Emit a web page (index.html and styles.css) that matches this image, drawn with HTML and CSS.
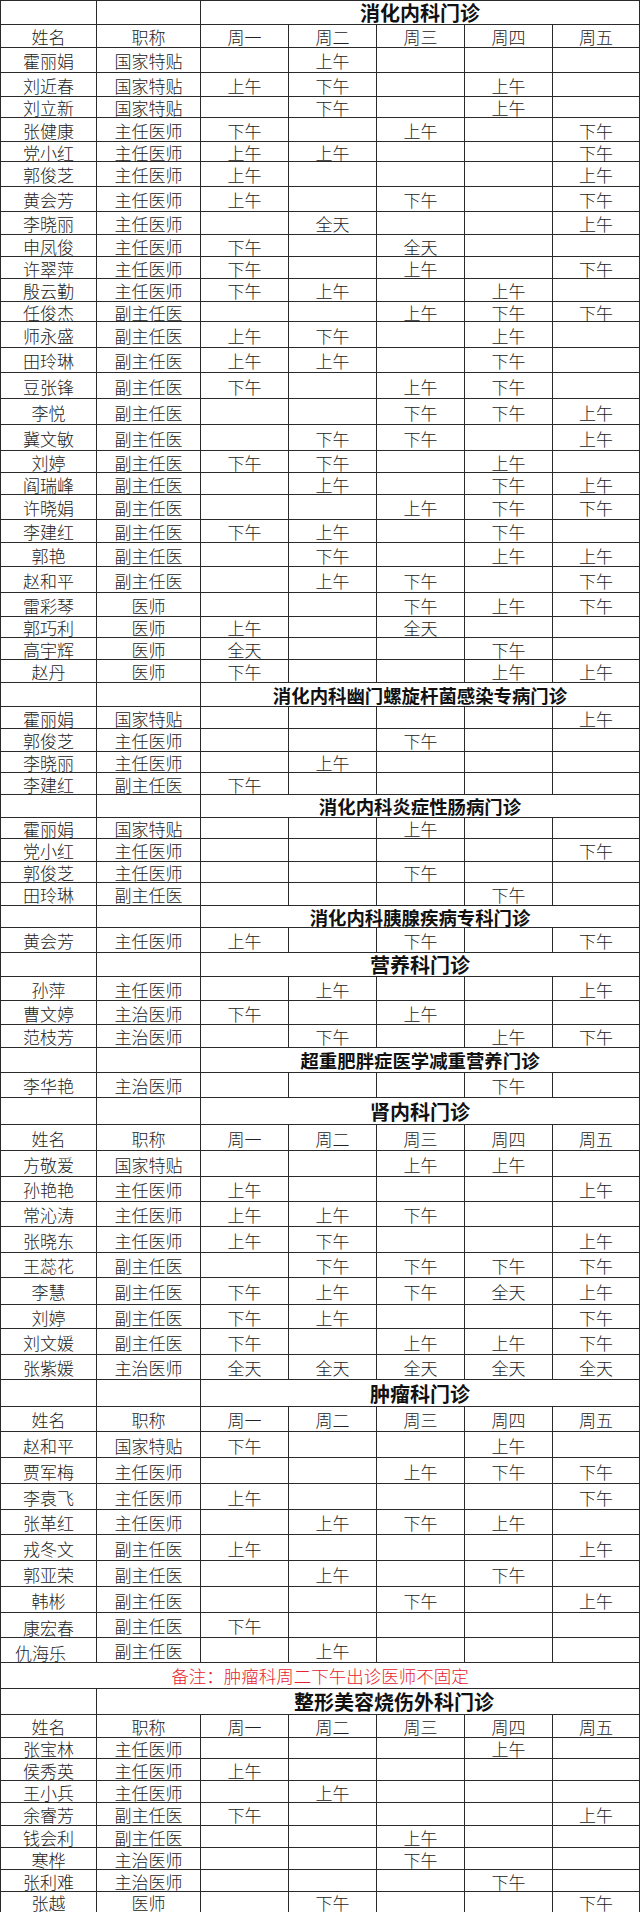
FILE: index.html
```html
<!DOCTYPE html>
<html lang="zh-CN">
<head>
<meta charset="utf-8">
<title>门诊出诊表</title>
<link rel="stylesheet" href="styles.css">
</head>
<body>
<div class="sheet">
  <div class="row h25"><div class="c"></div><div class="c"></div><div class="c t s5">消化内科门诊</div></div>
  <div class="row h23"><div class="c">姓名</div><div class="c">职称</div><div class="c">周一</div><div class="c">周二</div><div class="c">周三</div><div class="c">周四</div><div class="c">周五</div></div>
  <div class="row h25"><div class="c">霍丽娟</div><div class="c">国家特贴</div><div class="c"></div><div class="c">上午</div><div class="c"></div><div class="c"></div><div class="c"></div></div>
  <div class="row h24"><div class="c">刘近春</div><div class="c">国家特贴</div><div class="c">上午</div><div class="c">下午</div><div class="c"></div><div class="c">上午</div><div class="c"></div></div>
  <div class="row h21"><div class="c">刘立新</div><div class="c">国家特贴</div><div class="c"></div><div class="c">下午</div><div class="c"></div><div class="c">上午</div><div class="c"></div></div>
  <div class="row h24"><div class="c">张健康</div><div class="c">主任医师</div><div class="c">下午</div><div class="c"></div><div class="c">上午</div><div class="c"></div><div class="c">下午</div></div>
  <div class="row h20"><div class="c">党小红</div><div class="c">主任医师</div><div class="c">上午</div><div class="c">上午</div><div class="c"></div><div class="c"></div><div class="c">下午</div></div>
  <div class="row h25"><div class="c">郭俊芝</div><div class="c">主任医师</div><div class="c">上午</div><div class="c"></div><div class="c"></div><div class="c"></div><div class="c">上午</div></div>
  <div class="row h25"><div class="c">黄会芳</div><div class="c">主任医师</div><div class="c">上午</div><div class="c"></div><div class="c">下午</div><div class="c"></div><div class="c">下午</div></div>
  <div class="row h23"><div class="c">李晓丽</div><div class="c">主任医师</div><div class="c"></div><div class="c">全天</div><div class="c"></div><div class="c"></div><div class="c">上午</div></div>
  <div class="row h22"><div class="c">申凤俊</div><div class="c">主任医师</div><div class="c">下午</div><div class="c"></div><div class="c">全天</div><div class="c"></div><div class="c"></div></div>
  <div class="row h22"><div class="c">许翠萍</div><div class="c">主任医师</div><div class="c">下午</div><div class="c"></div><div class="c">上午</div><div class="c"></div><div class="c">下午</div></div>
  <div class="row h23"><div class="c">殷云勤</div><div class="c">主任医师</div><div class="c">下午</div><div class="c">上午</div><div class="c"></div><div class="c">上午</div><div class="c"></div></div>
  <div class="row h20"><div class="c">任俊杰</div><div class="c">副主任医</div><div class="c"></div><div class="c"></div><div class="c">上午</div><div class="c">下午</div><div class="c">下午</div></div>
  <div class="row h26"><div class="c">师永盛</div><div class="c">副主任医</div><div class="c">上午</div><div class="c">下午</div><div class="c"></div><div class="c">上午</div><div class="c"></div></div>
  <div class="row h25"><div class="c">田玲琳</div><div class="c">副主任医</div><div class="c">上午</div><div class="c">上午</div><div class="c"></div><div class="c">下午</div><div class="c"></div></div>
  <div class="row h26"><div class="c">豆张锋</div><div class="c">副主任医</div><div class="c">下午</div><div class="c"></div><div class="c">上午</div><div class="c">下午</div><div class="c"></div></div>
  <div class="row h26"><div class="c">李悦</div><div class="c">副主任医</div><div class="c"></div><div class="c"></div><div class="c">下午</div><div class="c">下午</div><div class="c">上午</div></div>
  <div class="row h26"><div class="c">冀文敏</div><div class="c">副主任医</div><div class="c"></div><div class="c">下午</div><div class="c">下午</div><div class="c"></div><div class="c">上午</div></div>
  <div class="row h22"><div class="c">刘婷</div><div class="c">副主任医</div><div class="c">下午</div><div class="c">下午</div><div class="c"></div><div class="c">上午</div><div class="c"></div></div>
  <div class="row h22"><div class="c">阎瑞峰</div><div class="c">副主任医</div><div class="c"></div><div class="c">上午</div><div class="c"></div><div class="c">下午</div><div class="c">上午</div></div>
  <div class="row h25"><div class="c">许晓娟</div><div class="c">副主任医</div><div class="c"></div><div class="c"></div><div class="c">上午</div><div class="c">下午</div><div class="c">下午</div></div>
  <div class="row h23"><div class="c">李建红</div><div class="c">副主任医</div><div class="c">下午</div><div class="c">上午</div><div class="c"></div><div class="c">下午</div><div class="c"></div></div>
  <div class="row h24"><div class="c">郭艳</div><div class="c">副主任医</div><div class="c"></div><div class="c">下午</div><div class="c"></div><div class="c">上午</div><div class="c">上午</div></div>
  <div class="row h26"><div class="c">赵和平</div><div class="c">副主任医</div><div class="c"></div><div class="c">上午</div><div class="c">下午</div><div class="c"></div><div class="c">下午</div></div>
  <div class="row h24"><div class="c">雷彩琴</div><div class="c">医师</div><div class="c"></div><div class="c"></div><div class="c">下午</div><div class="c">上午</div><div class="c">下午</div></div>
  <div class="row h21"><div class="c">郭巧利</div><div class="c">医师</div><div class="c">上午</div><div class="c"></div><div class="c">全天</div><div class="c"></div><div class="c"></div></div>
  <div class="row h22"><div class="c">高宇辉</div><div class="c">医师</div><div class="c">全天</div><div class="c"></div><div class="c"></div><div class="c">下午</div><div class="c"></div></div>
  <div class="row h23"><div class="c">赵丹</div><div class="c">医师</div><div class="c">下午</div><div class="c"></div><div class="c"></div><div class="c">上午</div><div class="c">上午</div></div>

  <div class="row h24"><div class="c"></div><div class="c"></div><div class="c t s5 sm">消化内科幽门螺旋杆菌感染专病门诊</div></div>
  <div class="row h22"><div class="c">霍丽娟</div><div class="c">国家特贴</div><div class="c"></div><div class="c"></div><div class="c"></div><div class="c"></div><div class="c">上午</div></div>
  <div class="row h23"><div class="c">郭俊芝</div><div class="c">主任医师</div><div class="c"></div><div class="c"></div><div class="c">下午</div><div class="c"></div><div class="c"></div></div>
  <div class="row h21"><div class="c">李晓丽</div><div class="c">主任医师</div><div class="c"></div><div class="c">上午</div><div class="c"></div><div class="c"></div><div class="c"></div></div>
  <div class="row h22"><div class="c">李建红</div><div class="c">副主任医</div><div class="c">下午</div><div class="c"></div><div class="c"></div><div class="c"></div><div class="c"></div></div>

  <div class="row h23"><div class="c"></div><div class="c"></div><div class="c t s5 sm">消化内科炎症性肠病门诊</div></div>
  <div class="row h21"><div class="c">霍丽娟</div><div class="c">国家特贴</div><div class="c"></div><div class="c"></div><div class="c">上午</div><div class="c"></div><div class="c"></div></div>
  <div class="row h23"><div class="c">党小红</div><div class="c">主任医师</div><div class="c"></div><div class="c"></div><div class="c"></div><div class="c"></div><div class="c">下午</div></div>
  <div class="row h21"><div class="c">郭俊芝</div><div class="c">主任医师</div><div class="c"></div><div class="c"></div><div class="c">下午</div><div class="c"></div><div class="c"></div></div>
  <div class="row h23"><div class="c">田玲琳</div><div class="c">副主任医</div><div class="c"></div><div class="c"></div><div class="c"></div><div class="c">下午</div><div class="c"></div></div>

  <div class="row h22"><div class="c"></div><div class="c"></div><div class="c t s5 sm">消化内科胰腺疾病专科门诊</div></div>
  <div class="row h25"><div class="c">黄会芳</div><div class="c">主任医师</div><div class="c">上午</div><div class="c"></div><div class="c">下午</div><div class="c"></div><div class="c">下午</div></div>

  <div class="row h24"><div class="c"></div><div class="c"></div><div class="c t s5">营养科门诊</div></div>
  <div class="row h24"><div class="c">孙萍</div><div class="c">主任医师</div><div class="c"></div><div class="c">上午</div><div class="c"></div><div class="c"></div><div class="c">上午</div></div>
  <div class="row h24"><div class="c">曹文婷</div><div class="c">主治医师</div><div class="c">下午</div><div class="c"></div><div class="c">上午</div><div class="c"></div><div class="c"></div></div>
  <div class="row h23"><div class="c">范枝芳</div><div class="c">主治医师</div><div class="c"></div><div class="c">下午</div><div class="c"></div><div class="c">上午</div><div class="c">下午</div></div>

  <div class="row h25"><div class="c"></div><div class="c"></div><div class="c t s5 sm">超重肥胖症医学减重营养门诊</div></div>
  <div class="row h25"><div class="c">李华艳</div><div class="c">主治医师</div><div class="c"></div><div class="c"></div><div class="c"></div><div class="c">下午</div><div class="c"></div></div>

  <div class="row h27"><div class="c"></div><div class="c"></div><div class="c t s5">肾内科门诊</div></div>
  <div class="row h26"><div class="c">姓名</div><div class="c">职称</div><div class="c">周一</div><div class="c">周二</div><div class="c">周三</div><div class="c">周四</div><div class="c">周五</div></div>
  <div class="row h26"><div class="c">方敬爱</div><div class="c">国家特贴</div><div class="c"></div><div class="c"></div><div class="c">上午</div><div class="c">上午</div><div class="c"></div></div>
  <div class="row h25"><div class="c">孙艳艳</div><div class="c">主任医师</div><div class="c">上午</div><div class="c"></div><div class="c"></div><div class="c"></div><div class="c">上午</div></div>
  <div class="row h25"><div class="c">常沁涛</div><div class="c">主任医师</div><div class="c">上午</div><div class="c">上午</div><div class="c">下午</div><div class="c"></div><div class="c"></div></div>
  <div class="row h26"><div class="c">张晓东</div><div class="c">主任医师</div><div class="c">上午</div><div class="c">下午</div><div class="c"></div><div class="c"></div><div class="c">上午</div></div>
  <div class="row h25"><div class="c">王蕊花</div><div class="c">副主任医</div><div class="c"></div><div class="c">下午</div><div class="c">下午</div><div class="c">下午</div><div class="c">下午</div></div>
  <div class="row h27"><div class="c">李慧</div><div class="c">副主任医</div><div class="c">下午</div><div class="c">上午</div><div class="c">下午</div><div class="c">全天</div><div class="c">上午</div></div>
  <div class="row h24"><div class="c">刘婷</div><div class="c">副主任医</div><div class="c">下午</div><div class="c">上午</div><div class="c"></div><div class="c"></div><div class="c">下午</div></div>
  <div class="row h26"><div class="c">刘文媛</div><div class="c">副主任医</div><div class="c">下午</div><div class="c"></div><div class="c">上午</div><div class="c">上午</div><div class="c">下午</div></div>
  <div class="row h25"><div class="c">张紫媛</div><div class="c">主治医师</div><div class="c">全天</div><div class="c">全天</div><div class="c">全天</div><div class="c">全天</div><div class="c">全天</div></div>

  <div class="row h27"><div class="c"></div><div class="c"></div><div class="c t s5">肿瘤科门诊</div></div>
  <div class="row h25"><div class="c">姓名</div><div class="c">职称</div><div class="c">周一</div><div class="c">周二</div><div class="c">周三</div><div class="c">周四</div><div class="c">周五</div></div>
  <div class="row h26"><div class="c">赵和平</div><div class="c">国家特贴</div><div class="c">下午</div><div class="c"></div><div class="c"></div><div class="c">上午</div><div class="c"></div></div>
  <div class="row h26"><div class="c">贾军梅</div><div class="c">主任医师</div><div class="c"></div><div class="c"></div><div class="c">上午</div><div class="c">下午</div><div class="c">下午</div></div>
  <div class="row h26"><div class="c">李袁飞</div><div class="c">主任医师</div><div class="c">上午</div><div class="c"></div><div class="c"></div><div class="c"></div><div class="c">下午</div></div>
  <div class="row h25"><div class="c">张革红</div><div class="c">主任医师</div><div class="c"></div><div class="c">上午</div><div class="c">下午</div><div class="c">上午</div><div class="c"></div></div>
  <div class="row h26"><div class="c">戎冬文</div><div class="c">副主任医</div><div class="c">上午</div><div class="c"></div><div class="c"></div><div class="c"></div><div class="c">上午</div></div>
  <div class="row h26"><div class="c">郭亚荣</div><div class="c">副主任医</div><div class="c"></div><div class="c">上午</div><div class="c"></div><div class="c">下午</div><div class="c"></div></div>
  <div class="row h26"><div class="c">韩彬</div><div class="c">副主任医</div><div class="c"></div><div class="c"></div><div class="c">下午</div><div class="c"></div><div class="c">上午</div></div>
  <div class="row h25"><div class="c low">康宏春</div><div class="c">副主任医</div><div class="c">下午</div><div class="c"></div><div class="c"></div><div class="c"></div><div class="c"></div></div>
  <div class="row h25"><div class="c shift">仇海乐</div><div class="c">副主任医</div><div class="c"></div><div class="c">上午</div><div class="c"></div><div class="c"></div><div class="c"></div></div>
  <div class="row h26"><div class="c note s7">备注：肿瘤科周二下午出诊医师不固定</div></div>

  <div class="row h26"><div class="c"></div><div class="c t s6 off">整形美容烧伤外科门诊</div></div>
  <div class="row h23"><div class="c">姓名</div><div class="c">职称</div><div class="c">周一</div><div class="c">周二</div><div class="c">周三</div><div class="c">周四</div><div class="c">周五</div></div>
  <div class="row h21"><div class="c">张宝林</div><div class="c">主任医师</div><div class="c"></div><div class="c"></div><div class="c"></div><div class="c">上午</div><div class="c"></div></div>
  <div class="row h22"><div class="c">侯秀英</div><div class="c">主任医师</div><div class="c">上午</div><div class="c"></div><div class="c"></div><div class="c"></div><div class="c"></div></div>
  <div class="row h22"><div class="c">王小兵</div><div class="c">主任医师</div><div class="c"></div><div class="c">上午</div><div class="c"></div><div class="c"></div><div class="c"></div></div>
  <div class="row h23"><div class="c">余睿芳</div><div class="c">副主任医</div><div class="c">下午</div><div class="c"></div><div class="c"></div><div class="c"></div><div class="c">上午</div></div>
  <div class="row h22"><div class="c">钱会利</div><div class="c">副主任医</div><div class="c"></div><div class="c"></div><div class="c">上午</div><div class="c"></div><div class="c"></div></div>
  <div class="row h22"><div class="c">寒桦</div><div class="c">主治医师</div><div class="c"></div><div class="c"></div><div class="c">下午</div><div class="c"></div><div class="c"></div></div>
  <div class="row h22"><div class="c">张利难</div><div class="c">主治医师</div><div class="c"></div><div class="c"></div><div class="c"></div><div class="c">下午</div><div class="c"></div></div>
  <div class="row h20 last"><div class="c">张越</div><div class="c">医师</div><div class="c"></div><div class="c">下午</div><div class="c"></div><div class="c"></div><div class="c">下午</div></div>
</div>
</body>
</html>
```

FILE: styles.css
```css
html, body {
  margin: 0;
  padding: 0;
  background: #ffffff;
}

body {
  font-family: "Noto Sans CJK SC", "Noto Sans", sans-serif;
  color: #222222;
}

.sheet {
  width: 640px;
  box-sizing: border-box;
  border-left: 1px solid #2a2a2a;
  border-top: 1px solid #2a2a2a;
}

.row {
  display: grid;
  grid-template-columns: 96px 104px 88px 88px 88px 88px 87px;
  box-sizing: border-box;
}

.h20 { height: 20px; }
.h21 { height: 21px; }
.h22 { height: 22px; }
.h23 { height: 23px; }
.h24 { height: 24px; }
.h25 { height: 25px; }
.h26 { height: 26px; }
.h27 { height: 27px; }

.row:first-child.h25 { height: 24px; }

.c {
  box-sizing: border-box;
  border-right: 1px solid #2a2a2a;
  border-bottom: 1px solid #2a2a2a;
  display: flex;
  align-items: center;
  justify-content: center;
  font-size: 17px;
  font-weight: 300;
  line-height: 1;
  white-space: nowrap;
  overflow: visible;
  padding-top: 1px;
}

.last .c {
  border-bottom: none;
}

.s5 { grid-column: span 5; }
.s6 { grid-column: span 6; }
.s7 { grid-column: span 7; }

.t {
  font-size: 20px;
  font-weight: 700;
  color: #111111;
}

.t.sm {
  font-size: 18.4px;
}

.t.off {
  padding-left: 52px;
}

.note {
  color: #e8222d;
  font-size: 17.5px;
}

.low {
  padding-top: 5px;
}

.shift {
  padding-right: 16px;
  padding-top: 4px;
}
```
